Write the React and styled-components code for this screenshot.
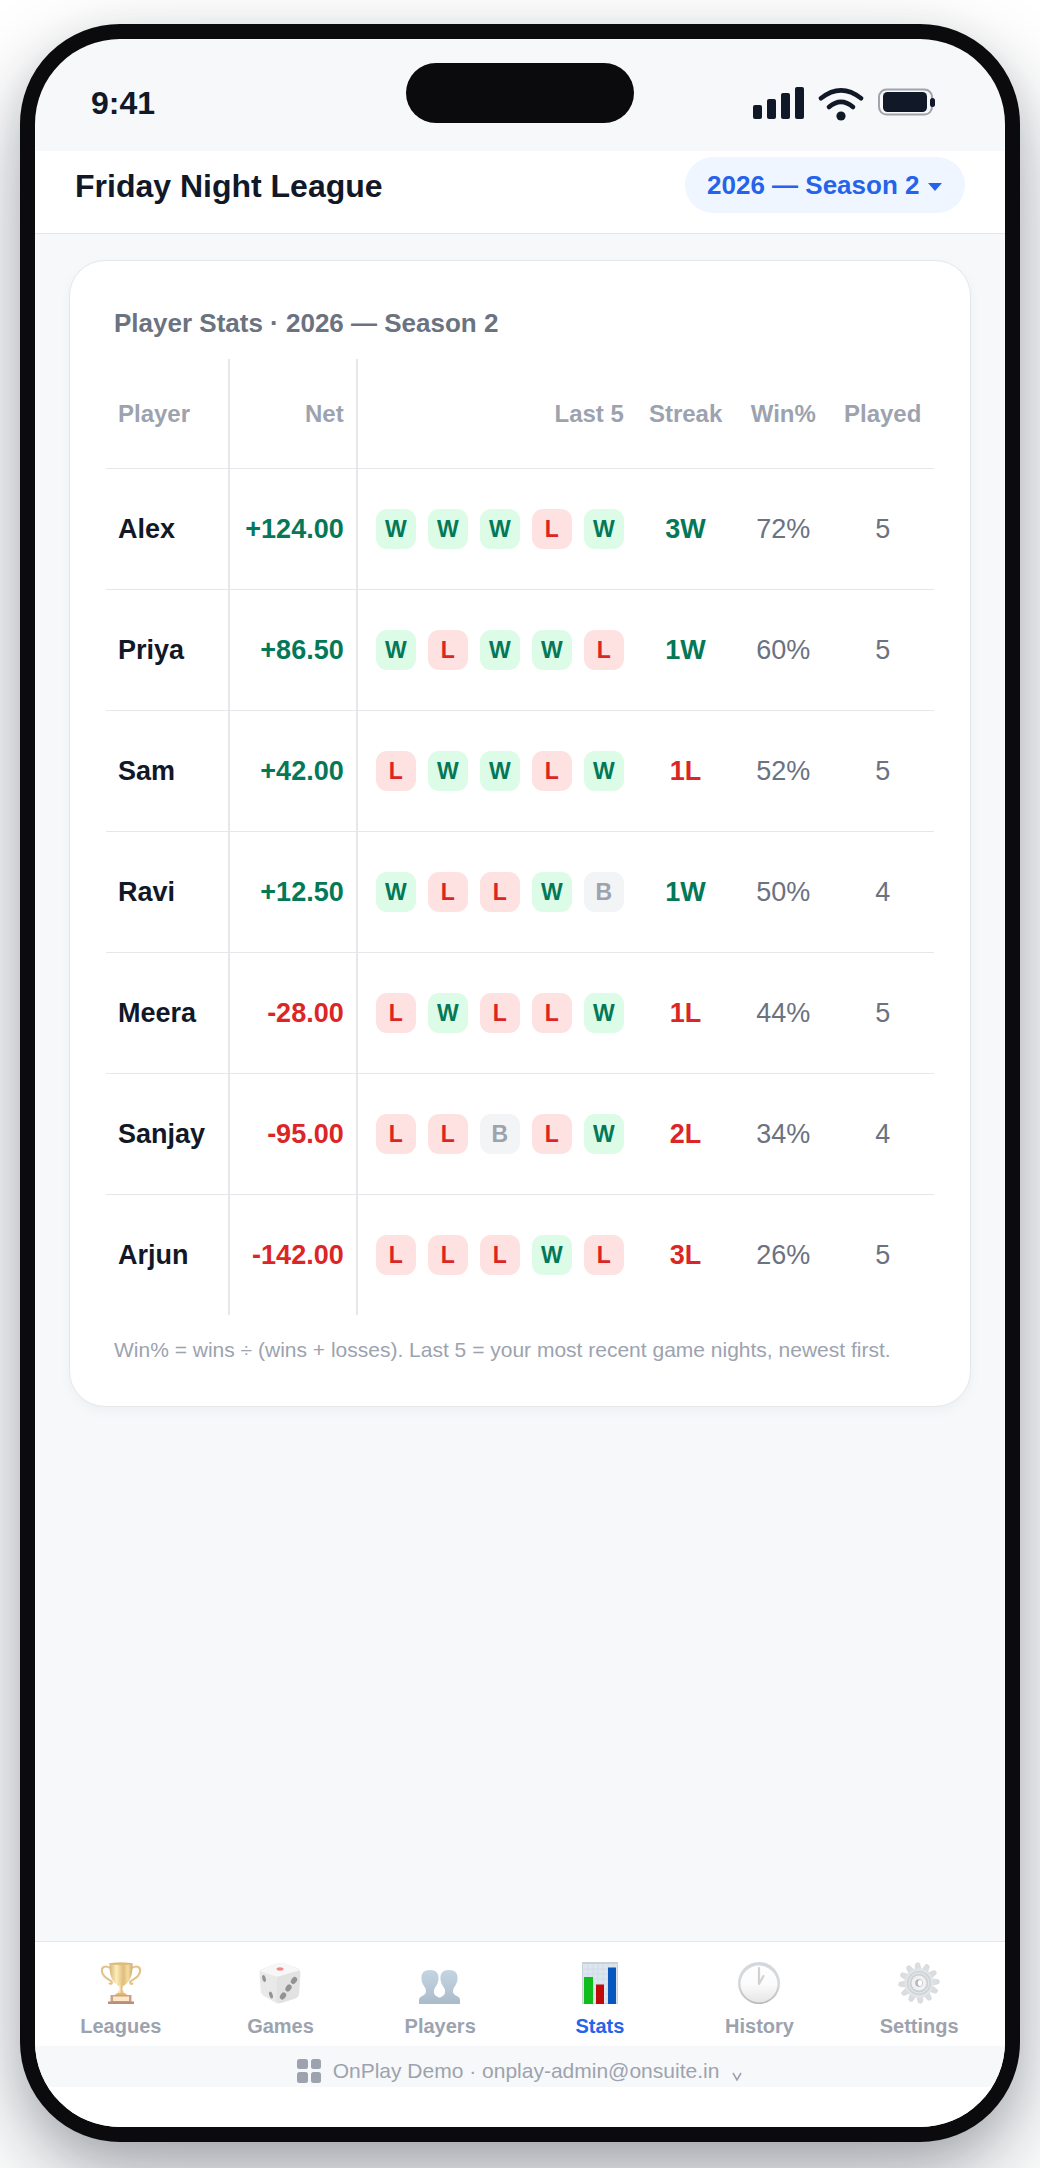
import React from "react";
import styled, { createGlobalStyle, css } from "styled-components";

const GlobalStyle = createGlobalStyle`
  :root {
    --color-ink: #111827;
    --color-slate: #6b7280;
    --color-muted: #9ca3af;
    --color-line: #e5e7eb;
    --color-page: #f7f8fa;
    --color-blue: #2563eb;
    --color-win: #047857;
    --color-loss: #dc2626;
  }

  * {
    box-sizing: border-box;
  }

  body {
    margin: 0;
    background-color: #fff;
    color: var(--color-ink);
    font-family: "Liberation Sans", Arial, sans-serif;
    overflow-x: hidden;
  }

  #root {
    overflow: hidden;
  }
`;

const Phone = styled.div`
  display: flex;
  flex-direction: column;
  min-height: calc(100vh - 50px);
  margin: 24px 20px 26px;
  border: 15px solid #0b0b0d;
  border-radius: 100px;
  background-color: #0b0b0d;
  box-shadow:
    0 40px 90px rgba(17, 24, 39, 0.32),
    0 12px 36px rgba(17, 24, 39, 0.12);
`;

const Screen = styled.div`
  display: flex;
  flex: 1;
  flex-direction: column;
  border-radius: 85px;
  background-color: var(--color-page);
  overflow: hidden;
`;

const StatusBar = styled.div`
  display: grid;
  grid-template-columns: 1fr auto 1fr;
  height: 112px;
  padding: 24px 56px 0;
`;

const Time = styled.span`
  padding-top: 21px;
  font-size: 32px;
  line-height: 38px;
  font-weight: 700;
`;

const Island = styled.div`
  width: 228px;
  height: 60px;
  border-radius: 30px;
  background-color: #0b0b0d;
`;

const StatusIcons = styled.div`
  display: flex;
  justify-content: flex-end;
  align-items: flex-start;
  gap: 14px;
  padding: 24px 14px 0 0;
`;

const Header = styled.header`
  display: flex;
  justify-content: space-between;
  align-items: flex-start;
  height: 83px;
  padding: 6px 40px 0;
  border-bottom: 1px solid var(--color-line);
  background-color: #fff;
`;

const Title = styled.h1`
  margin: 0;
  font-size: 32px;
  line-height: 58px;
  font-weight: 700;
`;

const SeasonPicker = styled.label`
  display: flex;
  align-items: center;
  gap: 7px;
  height: 56px;
  padding: 0 22px;
  border-radius: 28px;
  background-color: #eff6ff;
  color: var(--color-blue);
`;

const SeasonSelect = styled.select`
  appearance: none;
  margin: 0;
  padding: 0;
  border: 0;
  background: transparent;
  color: inherit;
  font-family: inherit;
  font-size: 26px;
  line-height: 32px;
  font-weight: 700;
  outline: none;
`;

const Main = styled.main`
  flex: 1;
  padding: 26px 34px;
`;

const Card = styled.section`
  padding: 46px 36px 42px;
  border: 1px solid var(--color-line);
  border-radius: 36px;
  background-color: #fff;
  box-shadow: 0 4px 12px rgba(17, 24, 39, 0.04);
`;

const CardTitle = styled.h2`
  margin: 0 0 20px;
  padding: 0 8px;
  color: var(--color-slate);
  font-size: 26px;
  line-height: 32px;
  font-weight: 700;
`;

const StatsTable = styled.table`
  width: 100%;
  table-layout: fixed;
  border-collapse: separate;
  border-spacing: 0;
`;

const Col = styled.col`
  width: ${(props) => props.$share}%;
`;

const cell = css`
  height: 121px;
  padding: 0 12px;
  border-bottom: 1px solid var(--color-line);
  border-right: ${(props) =>
    props.$divider ? "2px solid var(--color-line)" : "0"};
  text-align: ${(props) => props.$align || "center"};
  white-space: nowrap;
`;

const HeadCell = styled.th`
  ${cell}
  height: 110px;
  color: var(--color-muted);
  font-size: 24px;
  line-height: 32px;
  font-weight: 700;
`;

const toneColors = {
  name: "var(--color-ink)",
  win: "var(--color-win)",
  loss: "var(--color-loss)",
  plain: "var(--color-slate)",
};

const Cell = styled.td`
  ${cell}
  color: ${(props) => toneColors[props.$tone || "plain"]};
  font-size: 27px;
  line-height: 32px;
  font-weight: ${(props) => (props.$tone ? 700 : 400)};

  tr:last-child > & {
    height: 120px;
    border-bottom: 0;
  }
`;

const Results = styled.div`
  display: flex;
  justify-content: flex-end;
  gap: 12px;
`;

const chipColors = {
  W: css`
    background-color: #dcfce7;
    color: var(--color-win);
  `,
  L: css`
    background-color: #fee2e2;
    color: var(--color-loss);
  `,
  B: css`
    background-color: #f3f4f6;
    color: var(--color-muted);
  `,
};

const Chip = styled.span`
  width: 40px;
  height: 40px;
  border-radius: 11px;
  font-size: 23px;
  line-height: 40px;
  font-weight: 700;
  text-align: center;
  ${(props) => chipColors[props.$result]}
`;

const Note = styled.p`
  margin: 20px 0 0;
  padding: 0 8px;
  color: var(--color-muted);
  font-size: 21px;
  line-height: 29px;
`;

const TabBar = styled.nav`
  display: grid;
  grid-template-columns: repeat(6, 1fr);
  height: 105px;
  padding: 20px 6px 0;
  border-top: 1px solid var(--color-line);
  background-color: #fff;
`;

const Tab = styled.a`
  display: flex;
  flex-direction: column;
  align-items: center;
  gap: 10px;
  color: ${(props) =>
    props.$active ? "var(--color-blue)" : "var(--color-muted)"};
  font-size: 20px;
  line-height: 24px;
  font-weight: 700;
  text-decoration: none;

  svg {
    opacity: ${(props) => (props.$active ? 1 : 0.6)};
  }
`;

const Account = styled.button`
  display: flex;
  justify-content: center;
  align-items: center;
  gap: 12px;
  height: 41px;
  padding: 8px 0 0;
  border: 0;
  background-color: var(--color-page);
  color: var(--color-muted);
  font-family: inherit;
  font-size: 21px;
  line-height: 24px;
`;

const HomeArea = styled.div`
  height: 40px;
  background-color: #fff;
`;

function SignalIcon() {
  return (
    <svg width="51" height="34" viewBox="0 0 51 34" fill="#111827">
      <rect x="0" y="18" width="9" height="14" rx="2" />
      <rect x="14" y="12" width="9" height="20" rx="2" />
      <rect x="28" y="6" width="9" height="26" rx="2" />
      <rect x="42" y="0" width="9" height="32" rx="2" />
    </svg>
  );
}

function WifiIcon() {
  return (
    <svg width="46" height="34" viewBox="0 0 46 34" fill="none">
      <g stroke="#111827" strokeWidth="4.6" strokeLinecap="round">
        <path d="M3 11.2 Q23 -4.6 43 11.2" />
        <path d="M11 20 Q23 9.6 35 20" />
      </g>
      <circle cx="23" cy="29" r="4.6" fill="#111827" />
    </svg>
  );
}

function BatteryIcon() {
  return (
    <svg width="57" height="34" viewBox="0 0 57 34" fill="none">
      <rect x="1" y="2.6" width="53" height="25" rx="7.5" stroke="#a0a4ab" strokeWidth="2" />
      <rect x="5" y="5" width="44" height="20" rx="4.5" fill="#111827" />
      <rect x="52" y="11" width="5" height="9" rx="2.5" fill="#111827" />
    </svg>
  );
}

function CaretIcon() {
  return (
    <svg width="16" height="16" viewBox="0 0 16 16" fill="#2563eb">
      <path d="M1 6h14L8 14z" />
    </svg>
  );
}

function TrophyIcon() {
  return (
    <svg width="42" height="42" viewBox="0 0 42 42">
      <defs>
        <linearGradient id="gold">
          <stop offset="0" stopColor="#b98420" />
          <stop offset="0.3" stopColor="#ffe28c" />
          <stop offset="0.6" stopColor="#c9922a" />
          <stop offset="0.8" stopColor="#efc75c" />
          <stop offset="1" stopColor="#a87414" />
        </linearGradient>
      </defs>
      <g fill="none" stroke="#cf9a35" strokeWidth="2">
        <path d="M10 6C5 3 1 5 2 10c1 5 6 7 9 9 2 2 0 4-2 2" />
        <path d="M32 6c5-3 9-1 8 4-1 5-6 7-9 9-2 2 0 4 2 2" />
      </g>
      <path d="M9.5 1h23C33 13 30 20 23.5 24h-5C12 20 9 13 9.500 1z" fill="url(#gold)" />
      <ellipse cx="21" cy="1.8" rx="11.5" ry="1.5" fill="#c8912b" />
      <path d="M18.5 23h5l-1 4 2 5h-7l2-5z" fill="url(#gold)" />
      <path d="M15 33c1-3 11-3 12 0z" fill="#c88a1e" />
      <path d="M10.5 33h21v7h-21z" fill="#b0623c" />
      <path d="M8 39.5h26V42H8z" fill="#91401f" />
      <path d="M13 34.500h16V39H13z" fill="#fbd9a0" />
    </svg>
  );
}

function DiceIcon() {
  return (
    <svg width="42" height="42" viewBox="0 0 42 42">
      <path d="M3 7 18 1.500q4-1 8 0L38 6q4 2 3.500 6L40 32q-.5 3-4 4.500L22 41q-3 1-6-.5L5 34q-3-2-3.300-5L.5 12Q.3 8 3 7z" fill="#dcdcdc" />
      <path d="M2 8 18 1.500q4-1 8 0L39 7q1 2-2 3l-14 4q-4 1-7 0L3 10z" fill="#f3f3f3" />
      <path d="m18 15 20-6q3.500 0 3 4l-1 18q-.5 4-4 5.500L22 41q-4 1-4.500-4z" fill="#cfcfcf" />
      <ellipse cx="21" cy="7" rx="3.5" ry="1.7" fill="#ee3a3a" />
      <g fill="#4d4d4d">
        <ellipse cx="5" cy="16.5" rx="1.7" ry="3.5" transform="rotate(-14 5 16.5)" />
        <ellipse cx="12" cy="33" rx="1.7" ry="3.5" transform="rotate(-18 12 33)" />
        <ellipse cx="35" cy="18.5" rx="2.7" ry="3.8" transform="rotate(35 35 18.5)" />
        <ellipse cx="29.5" cy="26" rx="2.7" ry="3.8" transform="rotate(35 29.5 26)" />
        <ellipse cx="24" cy="34" rx="2.7" ry="3.8" transform="rotate(35 24 34)" />
      </g>
    </svg>
  );
}

const bustPath =
  "M11 8C5 8 2 11 2.500 17C2.500 21 5 24 6.500 26.500C7.500 30 7 32 4 33.500L1.500 35Q0 36 0 38V42H24V38Q22 36 18 34.500C14.500 33 14.500 29 15.500 26.500C17.500 23.500 19.500 20.500 19.500 17C20 11 17 8 11 8Z";

function PlayersIcon() {
  return (
    <svg width="42" height="42" viewBox="0 0 42 42">
      <defs>
        <linearGradient id="bust" x2="0" y2="1">
          <stop offset="0" stopColor="#9dbbd0" />
          <stop offset="1" stopColor="#748ea8" />
        </linearGradient>
      </defs>
      <path d={bustPath} fill="url(#bust)" transform="translate(41 0) scale(-1 1)" />
      <path d={bustPath} fill="url(#bust)" />
    </svg>
  );
}

function ChartIcon() {
  return (
    <svg width="42" height="42" viewBox="0 0 42 42">
      <path d="M3 0h36v42H3z" fill="#c9d1d8" />
      <path d="M4 2h34v39H4z" fill="#dbe6ef" />
      <path d="M4 7h34M4 12h34M4 17h34M4 22h34M4 27h34M4 32h34M4 37h34M9 2v39M14 2v39M19 2v39M24 2v39M29 2v39M34 2v39" stroke="#d0dce6" strokeWidth="1" />
      <path d="M5 15h9v27H5z" fill="#0fbe1c" />
      <path d="M17 22.500h8V42h-8z" fill="#c00a0a" />
      <path d="M29 5.500h8V42h-8z" fill="#0757be" />
    </svg>
  );
}

function ClockIcon() {
  return (
    <svg width="42" height="42" viewBox="0 0 42 42">
      <defs>
        <linearGradient id="rim" x2="0" y2="1">
          <stop offset="0" stopColor="#b4bfcb" />
          <stop offset="0.5" stopColor="#bcc0c5" />
          <stop offset="1" stopColor="#8a8a8a" />
        </linearGradient>
        <linearGradient id="dial" x2="0" y2="1">
          <stop offset="0" stopColor="#fff" />
          <stop offset="0.5" stopColor="#fafafa" />
          <stop offset="1" stopColor="#d6d6d6" />
        </linearGradient>
      </defs>
      <circle cx="21" cy="21" r="21" fill="url(#rim)" />
      <circle cx="21" cy="22" r="18.5" fill="url(#dial)" />
      <path d="M21 22V6M21 22l4.500-8" stroke="#b4b4b4" strokeWidth="2.2" strokeLinecap="round" />
    </svg>
  );
}

const teeth = Array.from({ length: 12 }, (_, index) => index * 30 - 4);

function GearIcon() {
  return (
    <svg width="42" height="42" viewBox="0 0 42 42">
      <g fill="#c3c9d0" stroke="#b5b0ab" strokeWidth="0.5">
        {teeth.map((angle) => (
          <path
            key={angle}
            d="M17.800 8.500 19 1.500q2-1.800 4 0l1.200 7z"
            transform={`rotate(${angle} 21 21)`}
          />
        ))}
      </g>
      <circle cx="21" cy="21" r="14.5" fill="#cfd4d9" />
      <circle cx="21" cy="21" r="12" fill="#aeb4b8" />
      <circle cx="21" cy="21" r="10" fill="none" stroke="#cdd2d5" strokeWidth="1.5" />
      <circle cx="21" cy="21" r="7.5" fill="#e6e9ed" />
      <circle cx="21" cy="21" r="3.8" fill="#8b867f" />
      <ellipse cx="22" cy="21" rx="2.2" ry="3" fill="#fff" />
    </svg>
  );
}

function GridIcon() {
  return (
    <svg width="24" height="24" viewBox="0 0 24 24" fill="#9ca3af">
      <rect width="11" height="10" rx="2.5" />
      <rect x="14" width="10" height="10" rx="2.5" />
      <rect y="13" width="11" height="11" rx="2.5" />
      <rect x="14" y="13" width="10" height="11" rx="2.5" />
    </svg>
  );
}

function ChevronIcon() {
  return (
    <svg width="12" height="24" viewBox="0 0 12 24" fill="none" stroke="#9ca3af" strokeWidth="1.6">
      <path d="m2 14 4 7 4-7" />
    </svg>
  );
}

const players = [
  { name: "Alex", net: "+124.00", last: "WWWLW", streak: "3W", win: "72%", played: 5 },
  { name: "Priya", net: "+86.50", last: "WLWWL", streak: "1W", win: "60%", played: 5 },
  { name: "Sam", net: "+42.00", last: "LWWLW", streak: "1L", win: "52%", played: 5 },
  { name: "Ravi", net: "+12.50", last: "WLLWB", streak: "1W", win: "50%", played: 4 },
  { name: "Meera", net: "-28.00", last: "LWLLW", streak: "1L", win: "44%", played: 5 },
  { name: "Sanjay", net: "-95.00", last: "LLBLW", streak: "2L", win: "34%", played: 4 },
  { name: "Arjun", net: "-142.00", last: "LLLWL", streak: "3L", win: "26%", played: 5 },
];

const tabs = [
  { label: "Leagues", icon: <TrophyIcon /> },
  { label: "Games", icon: <DiceIcon /> },
  { label: "Players", icon: <PlayersIcon /> },
  { label: "Stats", icon: <ChartIcon />, active: true },
  { label: "History", icon: <ClockIcon /> },
  { label: "Settings", icon: <GearIcon /> },
];

function PlayerRow({ player }) {
  return (
    <tr>
      <Cell $tone="name" $align="left" $divider>
        {player.name}
      </Cell>
      <Cell
        $tone={player.net.startsWith("+") ? "win" : "loss"}
        $align="right"
        $divider
      >
        {player.net}
      </Cell>
      <Cell>
        <Results>
          {player.last.split("").map((result, index) => (
            <Chip key={index} $result={result}>
              {result}
            </Chip>
          ))}
        </Results>
      </Cell>
      <Cell $tone={player.streak.endsWith("W") ? "win" : "loss"}>
        {player.streak}
      </Cell>
      <Cell>{player.win}</Cell>
      <Cell>{player.played}</Cell>
    </tr>
  );
}

function App() {
  return (
    <>
      <GlobalStyle />
      <Phone>
        <Screen>
          <StatusBar>
            <Time>9:41</Time>
            <Island />
            <StatusIcons>
              <SignalIcon />
              <WifiIcon />
              <BatteryIcon />
            </StatusIcons>
          </StatusBar>

          <Header>
            <Title>Friday Night League</Title>
            <SeasonPicker>
              <SeasonSelect aria-label="Season">
                <option>2026 — Season 2</option>
              </SeasonSelect>
              <CaretIcon />
            </SeasonPicker>
          </Header>

          <Main>
            <Card>
              <CardTitle>Player Stats · 2026 — Season 2</CardTitle>
              <StatsTable>
                <colgroup>
                  <Col $share={15} />
                  <Col $share={15.4} />
                  <Col $share={33.6} />
                  <Col $share={12} />
                  <Col $share={11.6} />
                  <Col $share={12.4} />
                </colgroup>
                <thead>
                  <tr>
                    <HeadCell $align="left" $divider>Player</HeadCell>
                    <HeadCell $align="right" $divider>Net</HeadCell>
                    <HeadCell $align="right">Last 5</HeadCell>
                    <HeadCell>Streak</HeadCell>
                    <HeadCell>Win%</HeadCell>
                    <HeadCell>Played</HeadCell>
                  </tr>
                </thead>
                <tbody>
                  {players.map((player) => (
                    <PlayerRow key={player.name} player={player} />
                  ))}
                </tbody>
              </StatsTable>
              <Note>
                Win% = wins ÷ (wins + losses). Last 5 = your most recent game
                nights, newest first.
              </Note>
            </Card>
          </Main>

          <TabBar>
            {tabs.map((tab) => (
              <Tab key={tab.label} href="#" $active={tab.active}>
                {tab.icon}
                {tab.label}
              </Tab>
            ))}
          </TabBar>
          <Account type="button">
            <GridIcon />
            OnPlay Demo · onplay-admin@onsuite.in
            <ChevronIcon />
          </Account>
          <HomeArea />
        </Screen>
      </Phone>
    </>
  );
}

export default App;
